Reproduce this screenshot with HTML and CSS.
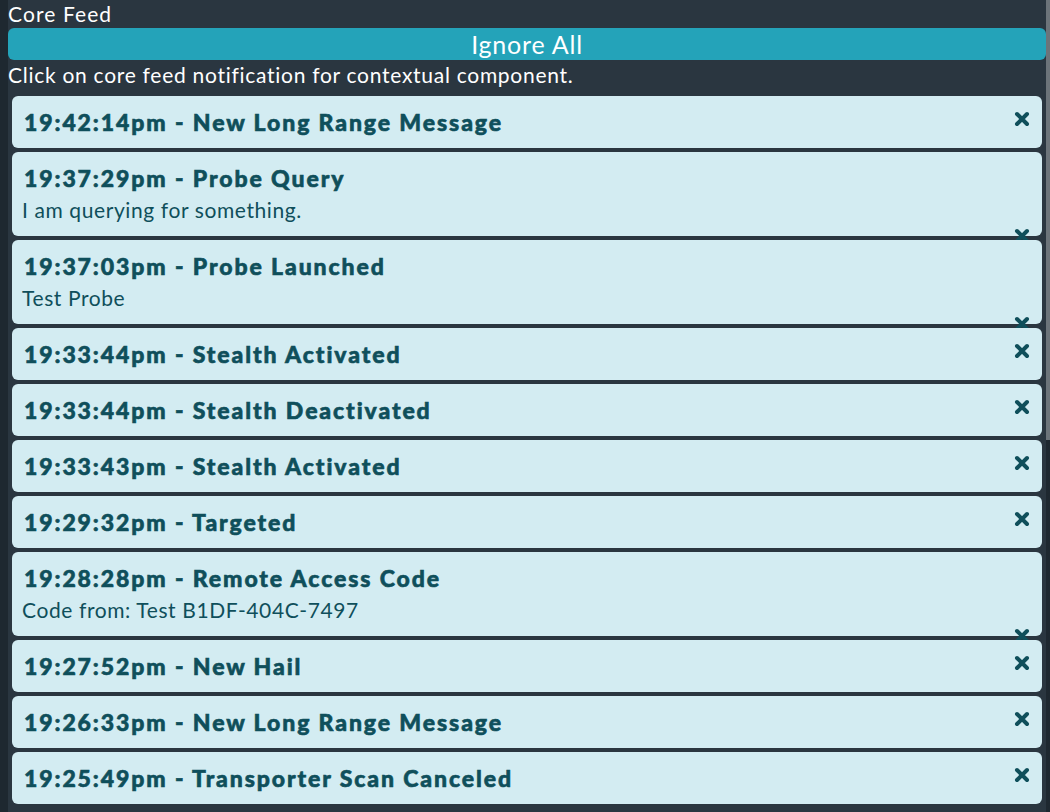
FILE: index.html
```html
<!DOCTYPE html>
<html>
<head>
<meta charset="utf-8">
<link rel="stylesheet" href="styles.css">
</head>
<body>
<div class="panel">
  <div class="heading">Core Feed</div>
  <button class="ignore">Ignore All</button>
  <div class="hint">Click on core feed notification for contextual component.</div>
  <div class="feed">
    <div class="card"><div class="title">19:42:14pm - New Long Range Message</div><svg class="close" viewBox="0 0 16 16"><path d="M3 3L13 13M13 3L3 13"/></svg></div>
    <div class="card tall"><div class="title">19:37:29pm - Probe Query</div><div class="body">I am querying for something.</div><svg class="close" viewBox="0 0 16 16"><path d="M3 3L13 13M13 3L3 13"/></svg></div>
    <div class="card tall"><div class="title">19:37:03pm - Probe Launched</div><div class="body">Test Probe</div><svg class="close" viewBox="0 0 16 16"><path d="M3 3L13 13M13 3L3 13"/></svg></div>
    <div class="card"><div class="title">19:33:44pm - Stealth Activated</div><svg class="close" viewBox="0 0 16 16"><path d="M3 3L13 13M13 3L3 13"/></svg></div>
    <div class="card"><div class="title">19:33:44pm - Stealth Deactivated</div><svg class="close" viewBox="0 0 16 16"><path d="M3 3L13 13M13 3L3 13"/></svg></div>
    <div class="card"><div class="title">19:33:43pm - Stealth Activated</div><svg class="close" viewBox="0 0 16 16"><path d="M3 3L13 13M13 3L3 13"/></svg></div>
    <div class="card"><div class="title">19:29:32pm - Targeted</div><svg class="close" viewBox="0 0 16 16"><path d="M3 3L13 13M13 3L3 13"/></svg></div>
    <div class="card tall"><div class="title">19:28:28pm - Remote Access Code</div><div class="body">Code from: Test B1DF-404C-7497</div><svg class="close" viewBox="0 0 16 16"><path d="M3 3L13 13M13 3L3 13"/></svg></div>
    <div class="card"><div class="title">19:27:52pm - New Hail</div><svg class="close" viewBox="0 0 16 16"><path d="M3 3L13 13M13 3L3 13"/></svg></div>
    <div class="card"><div class="title">19:26:33pm - New Long Range Message</div><svg class="close" viewBox="0 0 16 16"><path d="M3 3L13 13M13 3L3 13"/></svg></div>
    <div class="card"><div class="title">19:25:49pm - Transporter Scan Canceled</div><svg class="close" viewBox="0 0 16 16"><path d="M3 3L13 13M13 3L3 13"/></svg></div>
  </div>
</div>
<div class="thumb"></div>
</body>
</html>
```
FILE: styles.css
```css
html, body {
  margin: 0;
  padding: 0;
  height: 100%;
  overflow: hidden;
}
body {
  background: #1e2830;
  font-family: Lato, "Open Sans", sans-serif;
  position: relative;
}
.panel {
  margin-left: 8px;
  width: 1038px;
  height: 812px;
  background: #2a3640;
  display: flex;
  flex-direction: column;
}
.heading {
  color: #ffffff;
  font-size: 21px;
  letter-spacing: 1.1px;
  line-height: 28px;
  height: 28px;
}
.ignore {
  display: block;
  width: 100%;
  height: 32px;
  border: none;
  border-radius: 6px;
  background: #24a3b9;
  color: #ffffff;
  font-family: Lato, "Open Sans", sans-serif;
  font-size: 25px;
  letter-spacing: 0.8px;
  line-height: 32px;
  padding: 0;
  margin: 0;
}
.hint {
  color: #ffffff;
  font-size: 21px;
  letter-spacing: 0.72px;
  line-height: 26px;
  padding-top: 2px;
}
.feed {
  margin-top: 8px;
  padding: 0 4px;
  display: flex;
  flex-direction: column;
  gap: 4px;
}
.card {
  position: relative;
  background: #d3ecf2;
  border-radius: 6px;
  padding: 10px 12px;
  color: #0f4f5b;
}
.title {
  font-weight: 900;
  font-size: 23px;
  letter-spacing: 1.9px;
  line-height: 32px;
  -webkit-text-stroke: 0.6px #0f4f5b;
}
.body {
  font-size: 21px;
  letter-spacing: 0.6px;
  line-height: 32px;
  margin-left: -2px;
}
.close {
  position: absolute;
  right: 12px;
  top: 15px;
  width: 16px;
  height: 16px;
  fill: none;
  stroke: #0f4f5b;
  stroke-width: 4;
  stroke-linecap: round;
}
.tall .close {
  top: 76px;
}
.thumb {
  position: absolute;
  right: 0;
  top: 0;
  width: 4px;
  height: 440px;
  background: #6c747a;
}
```
